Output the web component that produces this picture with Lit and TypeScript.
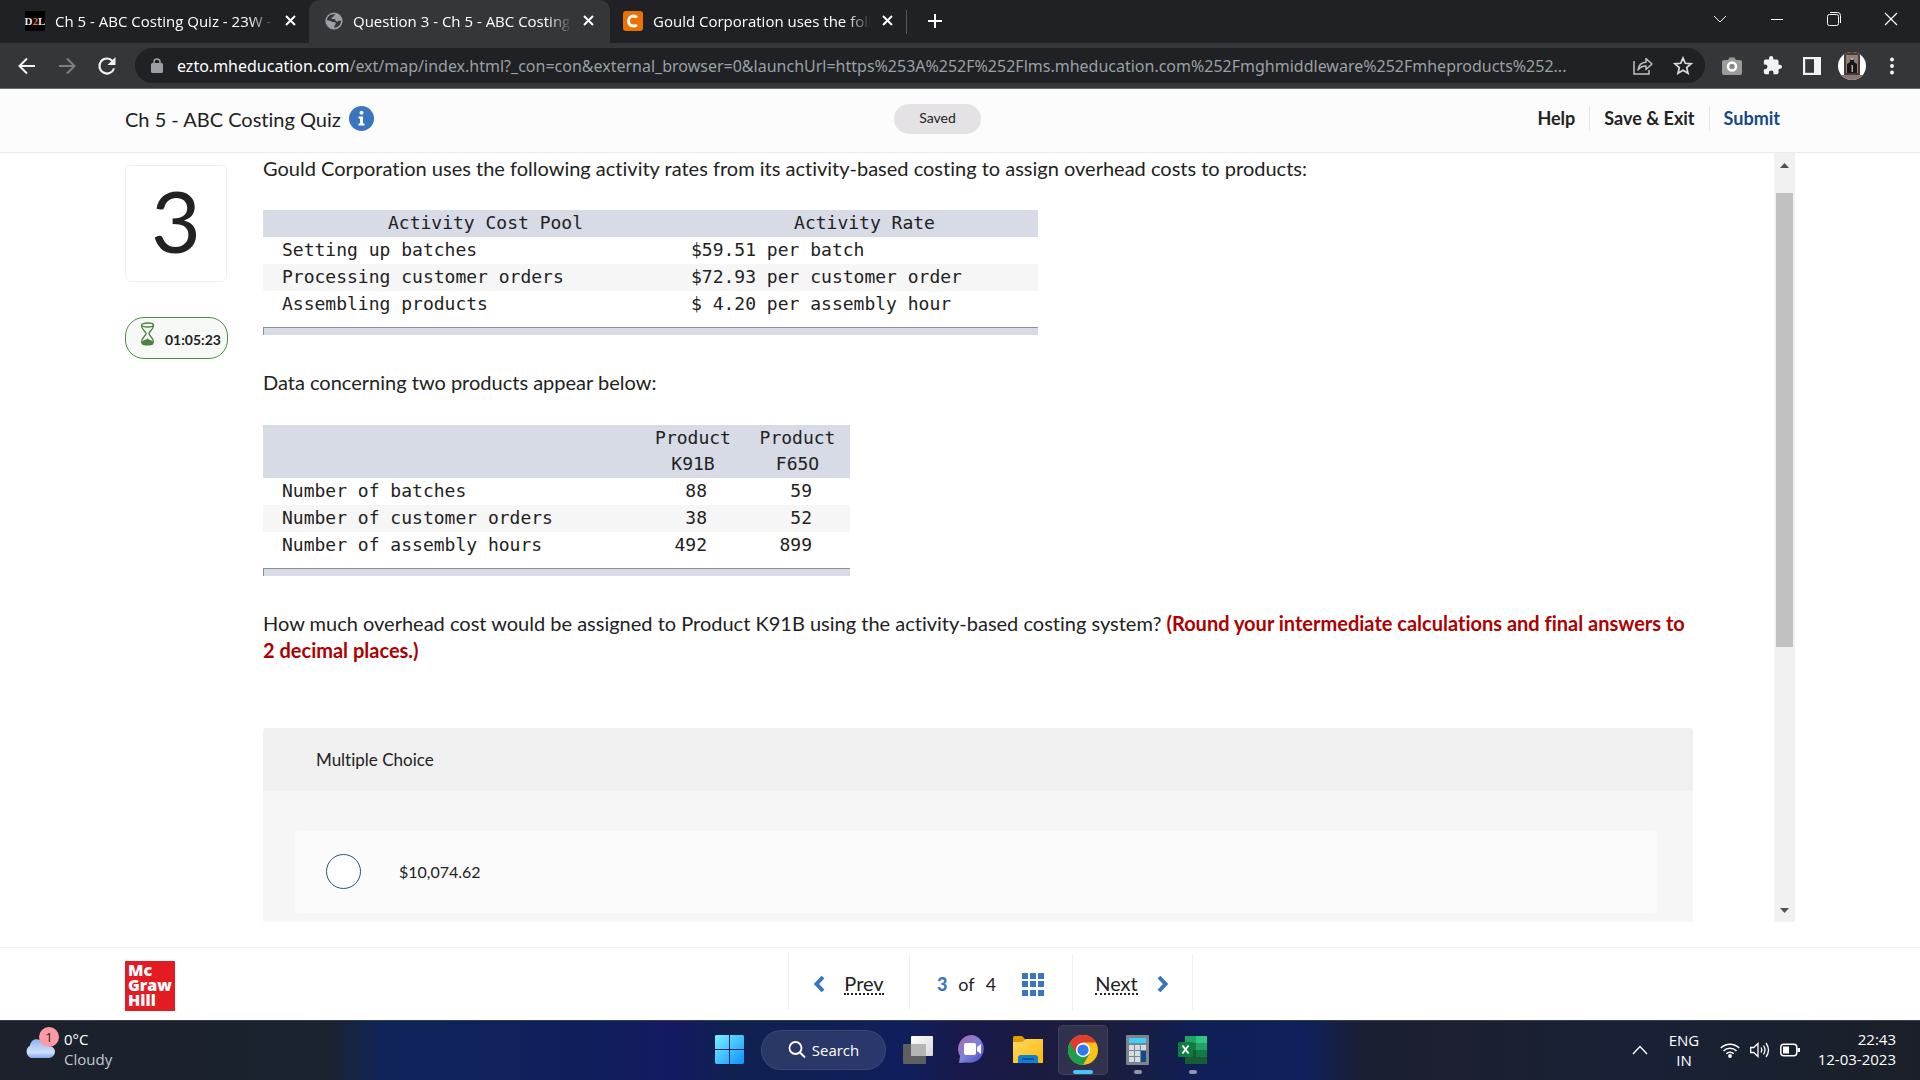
import { LitElement, html, svg, css } from "lit";
import { customElement, property, state } from "lit/decorators.js";

const baseStyles = css`
  :host, *, *::before, *::after { box-sizing: border-box; }
  button { border: 0; background: none; padding: 0; margin: 0; font: inherit; color: inherit; cursor: pointer; display: inline-flex; align-items: center; justify-content: center; }
  svg { display: block; flex: none; }
  p, h1, h2 { margin: 0; font: inherit; }
`;

const closeIcon = html`<svg width="14" height="14" viewBox="0 0 14 14"><path d="M2 2l9 9M11 2l-9 9" stroke="#fff" stroke-width="2" fill="none"/></svg>`;

const d2lIcon = html`<svg width="20" height="20" viewBox="0 0 20 20"><rect width="20" height="20" fill="#000"/>
  <text x="10" y="14" font-family="Liberation Serif, serif" font-size="11" font-weight="700" text-anchor="middle" fill="#e8e8e8">D<tspan fill="#e0762f">2</tspan>L</text></svg>`;

const globeIcon = html`<svg width="18" height="18" viewBox="0 0 18 18"><circle cx="9" cy="9" r="8.6" fill="#9aa0a6"/>
  <path d="M8 2.2C4.500 2.400 2.200 5 2 8.200l3 .5 2.400 1.200 2.800.4c1 .8.600 2.200-.5 2.900L9 15.800c4-.2 6.800-3 7-6.800l-2.200-.4-1.500 1.200-1.600-.8-.2-1.600-1.700-.4-1.800.3-.5-1.500 1.700-.7.5-1.500 1.800-.5-.6-.8z" fill="#35363a"/></svg>`;

const cheggIcon = html`<svg width="20" height="20" viewBox="0 0 20 20"><rect width="20" height="20" rx="3" fill="#eb7100"/>
  <path d="M14 6.200C13 5.300 12 5 10.500 5 7.500 5 5.600 7 5.600 10s1.900 5 4.900 5c1.500 0 2.500-.4 3.500-1.200" fill="none" stroke="#fff" stroke-width="2.800"/></svg>`;

interface Tab { title: string; icon: unknown; active?: boolean; }

@customElement("browser-chrome")
class BrowserChrome extends LitElement {
  @state() private tabs: Tab[] = [
    { title: "Ch 5 - ABC Costing Quiz - 23W --", icon: d2lIcon },
    { title: "Question 3 - Ch 5 - ABC Costing Q", icon: globeIcon, active: true },
    { title: "Gould Corporation uses the follow", icon: cheggIcon },
  ];

  static styles = [baseStyles, css`
    :host { display: block; font-family: "Open Sans", "Noto Sans", sans-serif; color: #fff; }
    .strip { display: flex; height: 43px; background: #202124; }
    .tabs { display: flex; }
    .tab { display: flex; align-items: center; width: 309px; padding: 0 11px 2px 25px; }
    .tab.active { background: #35363a; border-radius: 10px 10px 0 0; width: 301px; padding: 0 14px 2px 16px; }
    .tab:last-child { padding: 0 11px 2px 13px; width: 296px; }
    .name { flex: 1; min-width: 0; margin: 0 8px 0 10px; overflow: hidden; white-space: nowrap; font-size: 15px; line-height: 20px; -webkit-mask-image: linear-gradient(90deg, #000 88%, transparent 99%); mask-image: linear-gradient(90deg, #000 88%, transparent 99%); }
    .divider { width: 1px; height: 24px; margin-top: 10px; background: #56585c; }
    .plus { width: 56px; padding-bottom: 2px; }
    .window { margin-left: auto; display: flex; }
    .window button { width: 57px; padding: 0 2px 6px 0; }
    .bar { display: flex; align-items: center; height: 46px; padding: 0 14px 0 13px; background: #35363a; border-bottom: 1px solid #6a6b6e; }
    .nav { display: flex; width: 122px; gap: 12px; }
    .nav button { width: 28px; }
    .omni { flex: 1; min-width: 0; display: flex; align-items: center; height: 35px; border-radius: 18px; background: #202124; padding: 0 12px 0 16px; }
    .url { flex: 1; min-width: 0; white-space: nowrap; overflow: hidden; text-overflow: ellipsis; margin: 0 12px 0 14px; font-family: "Noto Sans", "Open Sans", sans-serif; font-size: 16px; line-height: 24px; color: #9aa0a6; }
    .url b { font-weight: 400; color: #fff; }
    .omni-actions { display: flex; gap: 20px; }
    .ext { display: flex; align-items: center; gap: 12px; padding-left: 13px; }
    .ext button { width: 28px; }
  `];

  render() {
    return html`
      <div class="strip">
        <div class="tabs">
          ${this.tabs.map((t) => html`<div class="tab ${t.active ? "active" : ""}">${t.icon}<span class="name">${t.title}</span><button aria-label="Close tab">${closeIcon}</button></div>`)}
        </div>
        <div class="divider"></div>
        <button class="plus" aria-label="New tab"><svg width="16" height="16" viewBox="0 0 16 16"><path d="M8 1v14M1 8h14" stroke="#fff" stroke-width="2"/></svg></button>
        <div class="window">
          <button aria-label="Search tabs"><svg width="14" height="14" viewBox="0 0 14 14"><path d="M1 4l6 6 6-6" fill="none" stroke="#fff"/></svg></button>
          <button aria-label="Minimize"><svg width="14" height="14" viewBox="0 0 14 14"><path d="M1 7.500h12" stroke="#fff"/></svg></button>
          <button aria-label="Restore"><svg width="14" height="14" viewBox="0 0 14 14"><rect x=".5" y="2.500" width="11" height="11" rx="2" fill="none" stroke="#fff"/><path d="M3 .5h7.500a3 3 0 0 1 3 3V11" fill="none" stroke="#fff"/></svg></button>
          <button aria-label="Close window"><svg width="14" height="14" viewBox="0 0 14 14"><path d="M1 1l12 12M13 1L1 13" stroke="#fff" stroke-width="1.200"/></svg></button>
        </div>
      </div>
      <div class="bar">
        <div class="nav">
          <button aria-label="Back"><svg width="18" height="18" viewBox="0 0 18 18"><path d="M17 9H2M9 1.500L1.500 9 9 16.500" fill="none" stroke="#f1f3f4" stroke-width="2"/></svg></button>
          <button aria-label="Forward"><svg width="18" height="18" viewBox="0 0 18 18"><path d="M1 9h15M9 1.500L16.500 9 9 16.500" fill="none" stroke="#7d7f83" stroke-width="2"/></svg></button>
          <button aria-label="Reload"><svg width="20" height="20" viewBox="0 0 20 20"><path d="M17 12.500A7.500 7.500 0 1 1 15.500 5L17 6.500" fill="none" stroke="#f1f3f4" stroke-width="2.200"/><path d="M18.500 1v8h-8z" fill="#f1f3f4"/></svg></button>
        </div>
        <div class="omni">
          <svg width="12" height="16" viewBox="0 0 12 16"><rect x="0" y="5" width="12" height="10" rx="1.500" fill="#9aa0a6"/><path d="M3 6V4a3 3 0 0 1 6 0v2" fill="none" stroke="#9aa0a6" stroke-width="1.500"/></svg>
          <div class="url"><b>ezto.mheducation.com</b>/ext/map/index.html?_con=con&amp;external_browser=0&amp;launchUrl=https%253A%252F%252Flms.mheducation.com%252Fmghmiddleware%252Fmheproducts%252...</div>
          <div class="omni-actions">
            <button aria-label="Share"><svg width="20" height="20" viewBox="0 0 20 20"><path d="M1 5v13h15v-4" fill="none" stroke="#bdc1c6" stroke-width="1.500"/><path d="M5 14c.5-5 3-7.500 8-7.800V2.500L19 8l-6 5.500V10c-3.500 0-6 1-8 4z" fill="none" stroke="#bdc1c6" stroke-width="1.500" stroke-linejoin="round"/></svg></button>
            <button aria-label="Bookmark"><svg width="20" height="20" viewBox="0 0 20 20"><path d="M10 2l2.300 5.300 5.700.5-4.300 3.800 1.300 5.700-5-3-5 3 1.300-5.700L2 7.800l5.700-.5z" fill="none" stroke="#dadce0" stroke-width="1.700"/></svg></button>
          </div>
        </div>
        <div class="ext">
          <button aria-label="Screenshot"><svg width="20" height="18" viewBox="0 0 20 18"><path d="M6 3l1.500-2.500h5L14 3h4a2 2 0 0 1 2 2v11a2 2 0 0 1-2 2H2a2 2 0 0 1-2-2V5a2 2 0 0 1 2-2z" fill="#9b9b9b"/><circle cx="10" cy="9.500" r="4" fill="#8a8a8a" stroke="#fff" stroke-width="2.500"/></svg></button>
          <button aria-label="Extensions"><svg width="19" height="19" viewBox="1 1 22 22"><path d="M20.500 11H19V7a2 2 0 0 0-2-2h-4V3.500a2.500 2.500 0 0 0-5 0V5H4a2 2 0 0 0-2 2v3.800h1.500a2.700 2.700 0 0 1 0 5.400H2V20a2 2 0 0 0 2 2h3.800v-1.500a2.700 2.700 0 0 1 5.400 0V22H17a2 2 0 0 0 2-2v-4h1.500a2.500 2.500 0 0 0 0-5z" fill="#f1f3f4"/></svg></button>
          <button aria-label="Side panel"><svg width="18" height="18" viewBox="0 0 18 18"><rect x="1" y="1" width="16" height="16" fill="none" stroke="#f1f3f4" stroke-width="2.400"/><path d="M11 0h7v18h-7z" fill="#f1f3f4"/></svg></button>
          <button aria-label="Profile"><svg width="28" height="28" viewBox="0 0 28 28"><defs><clipPath id="av"><circle cx="14" cy="14" r="14"/></clipPath></defs><g clip-path="url(#av)"><rect width="28" height="28" fill="#fff"/><path d="M6 0h16v24H6z" fill="#4b3a35"/><path d="M8 3h12v18H8z" fill="#8c827c"/><path d="M9 21l0-9 3-2 0-3h4v3l3 2 0 9z" fill="#17171a"/><path d="M13.500 13h1.500v7h-1.500zM12.500 6h3v2h-3z" fill="#c4a596"/><path d="M4 23h20v5H4z" fill="#8b7775"/></g></svg></button>
          <button aria-label="Menu"><svg width="6" height="18" viewBox="0 0 6 18"><g fill="#f1f3f4"><circle cx="3" cy="2.500" r="2"/><circle cx="3" cy="9" r="2"/><circle cx="3" cy="15.500" r="2"/></g></svg></button>
        </div>
      </div>`;
  }
}

@customElement("quiz-question")
class QuizQuestion extends LitElement {
  @property({ type: Number }) number = 3;

  static styles = [baseStyles, css`
    :host { display: grid; grid-template-columns: 104px minmax(0, 1fr) 21px; flex: 1; padding: 0 125px 25px; color: #222; font-family: Lato, "Open Sans", sans-serif; font-variant-ligatures: none; background: #fff; }
    .side { padding-top: 12px; }
    .num { display: flex; align-items: center; justify-content: center; height: 117px; width: 102px; padding-bottom: 8px; border: 1px solid #efefef; border-radius: 6px; font-size: 86px; line-height: 100px; }
    .timer { display: flex; align-items: center; gap: 10px; height: 42px; width: 103px; margin-top: 35px; padding: 2px 8px 0 14px; border: 1px solid #4f8a46; border-radius: 19px; background: #f6f9f6; font-size: 14px; font-weight: 700; white-space: nowrap; }
    .timer svg { margin-bottom: 10px; }
    .body { padding: 2px 81px 0 34px; font-size: 20px; line-height: 27px; display: flex; flex-direction: column; align-items: flex-start; }
    table { border-collapse: collapse; font-family: "DejaVu Sans Mono", "Liberation Mono", monospace; font-size: 18px; line-height: 26px; margin-top: 28px; white-space: pre; }
    th { font-weight: 400; background: #d6dbe6; text-align: center; }
    th, td { padding: 0 0 1px 19px; }
    td { text-align: left; }
    tr.alt td { background: #f6f6f6; }
    .rule { height: 8px; margin-top: 9px; background: #d6dbe6; border-top: 1px solid #8c8e99; border-left: 1px solid #8c8e99; }
    .w1 { width: 409px; padding-left: 36px; }
    .w2 { width: 366px; }
    .p1 { width: 378px; }
    .p2 { width: 104px; }
    .p3 { width: 105px; }
    .data th { padding: 0 0 1px; }
    .data .n { text-align: right; padding: 0 38px 1px 0; }
    .data table { margin-top: 29px; }
    .next { margin-top: 34px; }
    .hint { color: #ae0000; font-weight: 700; }
    .panel { align-self: stretch; margin-top: 64px; flex: 1; background: #f6f6f6; border-radius: 4px 4px 0 0; }
    .panel-head { height: 63px; padding: 18px 53px 0; background: #f0f0f0; border-radius: 4px 4px 0 0; font-size: 17px; }
    .choice { display: flex; align-items: center; height: 82px; margin: 40px 36px 0 32px; padding: 0 31px 2px; background: #fbfbfb; border-radius: 4px; font-size: 16px; gap: 38px; }
    .choice input { appearance: none; width: 35px; height: 35px; margin: 0; border: 1px solid #1d5488; border-radius: 50%; background: #fff; }
    .choice input:checked { background: #1d5488; box-shadow: inset 0 0 0 7px #fff; }
    .scroll { display: flex; flex-direction: column; align-items: center; background: #f1f1f1; }
    .scroll button { height: 24px; width: 21px; }
    .thumb { width: 17px; height: 454px; margin-top: 16px; background: #c1c1c1; margin-bottom: auto; }
  `];

  private rates = [
    ["Setting up batches", "$59.51 per batch"],
    ["Processing customer orders", "$72.93 per customer order"],
    ["Assembling products", "$ 4.20 per assembly hour"],
  ];

  private data = [
    ["Number of batches", "88", "59"],
    ["Number of customer orders", "38", "52"],
    ["Number of assembly hours", "492", "899"],
  ];

  render() {
    return html`
      <div class="side">
        <div class="num">${this.number}</div>
        <div class="timer">
          <svg width="15" height="24" viewBox="0 0 15 24"><g fill="none" stroke="#4a8240" stroke-width="1.400"><ellipse cx="7.500" cy="3" rx="6" ry="2"/><path d="M1.500 3c0 5.500 4.500 6 4.500 8.500s-4.500 3.500-4.500 9M13.500 3c0 5.500-4.500 6-4.500 8.500s4.500 3.500 4.500 9"/></g><path d="M1.500 20c2-2.500 5-1.500 6-4 1 2.500 4 1.500 6 4v2c-2 2-10 2-12 0z" fill="#4a8240"/></svg>
          <time>01:05:23</time>
        </div>
      </div>
      <div class="body">
        <p>Gould Corporation uses the following activity rates from its activity-based costing to assign overhead costs to products:</p>
        <div class="rates">
          <table>
            <thead><tr><th class="w1" scope="col">Activity Cost Pool</th><th class="w2" scope="col">Activity Rate</th></tr></thead>
            <tbody>${this.rates.map(([a, b], i) => html`<tr class=${i === 1 ? "alt" : ""}><td>${a}</td><td>${b}</td></tr>`)}</tbody>
          </table>
          <div class="rule"></div>
        </div>
        <p class="next">Data concerning two products appear below:</p>
        <div class="data">
          <table>
            <thead><tr><th class="p1"></th><th class="p2" scope="col">Product<br>K91B</th><th class="p3" scope="col">Product<br>F65O</th></tr></thead>
            <tbody>${this.data.map(([a, b, c], i) => html`<tr class=${i === 1 ? "alt" : ""}><td>${a}</td><td class="n">${b}</td><td class="n">${c}</td></tr>`)}</tbody>
          </table>
          <div class="rule"></div>
        </div>
        <p class="next">How much overhead cost would be assigned to Product K91B using the activity-based costing system? <strong class="hint">(Round your intermediate calculations and final answers to 2 decimal places.)</strong></p>
        <section class="panel">
          <h2 class="panel-head">Multiple Choice</h2>
          <label class="choice"><input type="radio" name="answer" value="10074.62"><span>$10,074.62</span></label>
        </section>
      </div>
      <div class="scroll">
        <button aria-label="Scroll up"><svg width="9" height="5" viewBox="0 0 9 5"><path d="M0 5l4.500-5L9 5z" fill="#505050"/></svg></button>
        <div class="thumb"></div>
        <button aria-label="Scroll down"><svg width="9" height="5" viewBox="0 0 9 5"><path d="M0 0l4.500 5L9 0z" fill="#505050"/></svg></button>
      </div>`;
  }
}

@customElement("quiz-header")
class QuizHeader extends LitElement {
  static styles = [baseStyles, css`
    :host { display: grid; grid-template-columns: 1fr auto 1fr; align-items: center; height: 64px; padding: 0 140px 4px 125px; background: #fcfcfc; border-bottom: 1px solid #ebebeb; color: #222; font-family: Lato, "Open Sans", sans-serif; font-variant-ligatures: none; }
    .title { display: flex; align-items: center; gap: 8px; font-size: 20px; line-height: 28px; }
    .saved { margin-right: 30px; padding: 0 25px; height: 30px; line-height: 28px; border-radius: 15px; background: #e4e2e5; font-size: 14px; }
    .links { justify-self: end; display: flex; font-size: 18px; line-height: 25px; font-weight: 700; }
    .links button { padding: 0 14px; border-right: 1px solid #e6e6e6; }
    .links button:last-child { border: 0; padding-right: 0; color: #134a86; }
  `];

  render() {
    return html`
      <h1 class="title">Ch 5 - ABC Costing Quiz
        <button aria-label="Quiz information"><svg width="25" height="25" viewBox="0 0 25 25"><circle cx="12.500" cy="12.500" r="12.500" fill="#3a76bd"/><circle cx="12.500" cy="6.800" r="2" fill="#fff"/><path d="M9.500 10.500h4.500v7h1.500v2h-6v-2H11v-5H9.500z" fill="#fff"/></svg></button>
      </h1>
      <div class="saved">Saved</div>
      <nav class="links"><button>Help</button><button>Save &amp; Exit</button><button>Submit</button></nav>`;
  }
}

@customElement("quiz-footer")
class QuizFooter extends LitElement {
  static styles = [baseStyles, css`
    :host { display: grid; grid-template-columns: 1fr auto 1fr; height: 73px; padding: 0 65px 0 125px; background: #fff; border-top: 1px solid #f1f1f1; color: #222; font-family: Lato, "Open Sans", sans-serif; }
    .logo { width: 50px; height: 50px; margin-top: 13px; padding: 2px 3px; background: #e31b23; color: #fff; font-family: "Open Sans", sans-serif; font-weight: 800; font-size: 16px; line-height: 15px; }
    .pager { display: flex; margin-top: 6px; height: 56px; font-size: 20px; line-height: 24px; border-left: 1px solid #efefef; }
    .cell { display: flex; align-items: center; justify-content: center; padding-top: 4px; border-right: 1px solid #efefef; }
    .prev { width: 121px; gap: 19px; }
    .mid { width: 163px; font-size: 18px; gap: 11px; }
    .next { width: 120px; gap: 19px; }
    .label { border-bottom: 2px dotted #222; line-height: 20px; }
    .current { color: #3a76bd; font-weight: 900; }
    .mid button { margin-left: 15px; }
  `];

  render() {
    return html`
      <div class="logo">Mc<br>Graw<br>Hill</div>
      <nav class="pager">
        <button class="cell prev"><svg width="12" height="18" viewBox="0 0 12 18"><path d="M10 2L3.500 9l6.500 7" fill="none" stroke="#3a76bd" stroke-width="4"/></svg><span class="label">Prev</span></button>
        <div class="cell mid"><span class="current">3</span><span>of</span><span>4</span>
          <button aria-label="All questions"><svg width="22" height="23" viewBox="0 0 22 23"><g fill="#3a76bd">${[0, 8, 16].map((x) => [0, 8, 17].map((y) => svg`<rect x=${x} y=${y} width="6" height="6"/>`))}</g></svg></button></div>
        <button class="cell next"><span class="label">Next</span><svg width="12" height="18" viewBox="0 0 12 18"><path d="M2 2l6.500 7L2 16" fill="none" stroke="#3a76bd" stroke-width="4"/></svg></button>
      </nav>`;
  }
}

@customElement("desktop-taskbar")
class DesktopTaskbar extends LitElement {
  static styles = [baseStyles, css`
    :host { display: grid; grid-template-columns: 1fr auto 1fr; height: 60px; padding: 0 24px 2px 25px; border-top: 1px solid #35404f; color: #fff; font-family: "Open Sans", "Noto Sans", sans-serif; font-size: 15px; line-height: 20px;
      background: linear-gradient(90deg, #1c212b 0%, #1a2330 17%, #10245a 20%, #101f5c 30%, #141a62 35%, #10204f 38%, #101f5c 47%, #18194a 50%, #1c1d3a 57%, #0f1f58 63%, #10205a 68%, #1a1f33 71%, #1c2030 76%, #182136 85%, #1b2028 100%); }
    .weather { justify-self: start; align-items: flex-start; gap: 5px; padding-top: 6px; text-align: left; }
    .weather div { padding-top: 2px; }
    .weather small { display: block; font-size: 15px; color: #c4c8cf; }
    .apps { display: flex; align-items: center; margin-left: 6px; }
    .app { position: relative; width: 55px; height: 50px; }
    .app.start { width: 44px; }
    .search { width: 125px; height: 40px; margin: 0 4px 0 10px; gap: 6px; border-radius: 20px; background: #ffffff1c; border: 1px solid #ffffff12; }
    .app.on .tile { display: flex; align-items: center; justify-content: center; width: 50px; height: 50px; border-radius: 5px; background: #ffffff18; border: 1px solid #ffffff14; }
    .app i { position: absolute; bottom: 1px; left: 24px; width: 8px; height: 4px; border-radius: 2px; background: #9397a5; }
    .app.on i { left: 18px; width: 20px; background: #4cc2ff; }
    .tray { justify-self: end; display: flex; align-items: center; }
    .lang { width: 72px; text-align: center; }
    .status { display: flex; gap: 10px; padding-right: 17px; }
    .clock { text-align: right; width: 79px; white-space: nowrap; padding-bottom: 2px; }
  `];

  render() {
    return html`
      <button class="weather">
        <svg width="34" height="32" viewBox="2 0 34 32"><defs><linearGradient id="cl" x2="0" y2="1"><stop offset="0" stop-color="#8fb6ee"/><stop offset=".7" stop-color="#cfe0fb"/><stop offset="1" stop-color="#86a8ee"/></linearGradient></defs><path d="M8 31a7 7 0 0 1 -1-12.500C8 13 12 11 17 13c3 0 6 3 7 6 11-1 10 12 1 12z" fill="url(#cl)"/><circle cx="26" cy="10" r="10" fill="#ff99a4"/><text x="26" y="15" font-size="13" text-anchor="middle" fill="#222" font-family="Open Sans, sans-serif">1</text></svg>
        <div>0°C<small>Cloudy</small></div>
      </button>
      <div class="apps">
        <button class="app start" aria-label="Start"><svg width="29" height="29" viewBox="0 0 29 29"><defs><linearGradient id="w" gradientUnits="userSpaceOnUse" x2="29" y2="29"><stop offset="0" stop-color="#7bf0ff"/><stop offset="1" stop-color="#0a92ff"/></linearGradient></defs><path d="M1 0h13v14H0V1zM15 0h13l1 1v13H15zM0 15h14v14H1l-1-1zM15 15h14v13l-1 1H15z" fill="url(#w)"/></svg></button>
        <button class="search"><svg width="18" height="18" viewBox="0 0 18 18"><circle cx="7.500" cy="7" r="6" fill="none" stroke="#fff" stroke-width="1.800"/><path d="M12 11.500l5 5" stroke="#fff" stroke-width="2"/></svg>Search</button>
        <button class="app" aria-label="Task view"><svg width="30" height="28" viewBox="0 0 30 28"><defs><linearGradient id="tv" x2="1" y2="1"><stop offset="0" stop-color="#fff"/><stop offset="1" stop-color="#d8d8d8"/></linearGradient></defs><rect y="8" width="23" height="20" rx="1" fill="#5f5f60"/><rect x="8" width="22" height="20" rx="1" fill="url(#tv)"/><path d="M8 8h15v12H8z" fill="#b5b5b5"/></svg></button>
        <button class="app" aria-label="Chat"><svg width="29" height="29" viewBox="0 0 29 29"><defs><linearGradient id="ch" x2="1" y2="1"><stop offset=".1" stop-color="#a56bb0"/><stop offset=".5" stop-color="#7f82dc"/><stop offset="1" stop-color="#4349bf"/></linearGradient></defs><path d="M14.500 0A14 14 0 1 1 9 27.500L1 28l1-7A14 14 0 0 1 14.500 0z" fill="url(#ch)"/><rect x="6" y="8" width="12" height="12" rx="2" fill="#fff"/><path d="M19 12l4-3v10l-4-3z" fill="#fff"/></svg></button>
        <button class="app" aria-label="File Explorer"><svg width="30" height="27" viewBox="0 0 30 27"><defs><linearGradient id="fo" x2="1" y2="1"><stop offset="0" stop-color="#ffd867"/><stop offset="1" stop-color="#ffb900"/></linearGradient></defs><path d="M0 1.500Q0 0 1.500 0H9l4 4-4 4H0z" fill="#e09c00"/><path d="M0 6h9l4-3h17v24H0z" fill="url(#fo)"/><path d="M5 27v-5q0-3 3-3h14q3 0 3 3v5z" fill="#0f7fd4"/><path d="M9 23h12" stroke="#064a86" stroke-width="1.500"/></svg></button>
        <button class="app on" aria-label="Chrome"><span class="tile"><svg width="30" height="30" viewBox="0 0 48 48"><circle cx="24" cy="24" r="24" fill="#fbc116"/><path d="M3.200 12A24 24 0 0 0 24 48l10.400-18L24 24z" fill="#219b4c"/><path d="M3.200 12A24 24 0 0 1 44.800 12H24L13.600 30z" fill="#e33b2e"/><circle cx="24" cy="24" r="11.500" fill="#fff"/><circle cx="24" cy="24" r="9" fill="#3078ee"/></svg></span><i></i></button>
        <button class="app" aria-label="Calculator"><svg width="23" height="30" viewBox="0 0 23 30"><rect width="23" height="30" rx="1" fill="#7d858c"/><rect x="3" y="3" width="17" height="5" fill="#3cd2f8"/><g fill="#d5dce2">${[10, 16, 22].map((y) => [3, 9, 15].map((x) => x === 15 && y > 10 ? "" : svg`<rect x=${x} y=${y} width="5" height="5"/>`))}</g><rect x="15" y="16" width="5" height="11" fill="#114a8b"/></svg><i></i></button>
        <button class="app" aria-label="Excel"><svg width="30" height="28" viewBox="0 0 30 28"><path d="M7 0h11v7H7z" fill="#21a366"/><path d="M18 0h11v7H18z" fill="#33c481"/><path d="M7 7h11v7H7z" fill="#107c41"/><path d="M18 7h11v7H18z" fill="#21a366"/><path d="M7 14h11v7H7z" fill="#185c37"/><path d="M18 14h11v7H18z" fill="#107c41"/><path d="M7 21h22v7H7z" fill="#185c37"/><rect y="6" width="15" height="15" rx="1" fill="#107c41"/><path d="M4.500 9.500l6 8M10.500 9.500l-6 8" stroke="#fff" stroke-width="2"/></svg><i></i></button>
      </div>
      <div class="tray">
        <button aria-label="Show hidden icons"><svg width="16" height="10" viewBox="0 0 16 10"><path d="M1 9l7-7.500L15 9" fill="none" stroke="#fff" stroke-width="1.400"/></svg></button>
        <div class="lang">ENG<br>IN</div>
        <div class="status">
          <svg width="20" height="16" viewBox="0 0 20 16"><g fill="none" stroke="#fff" stroke-width="1.500"><path d="M.8 6a13 13 0 0 1 18.400 0M3.500 9a9.200 9.200 0 0 1 13 0M6.300 11.800a5.300 5.300 0 0 1 7.400 0"/></g><circle cx="10" cy="14" r="1.900" fill="#fff"/></svg>
          <svg width="20" height="16" viewBox="0 0 20 16"><g fill="none" stroke="#fff" stroke-width="1.300"><path d="M.7 5.500h3L8 1.500v13l-4.300-4h-3z"/><path d="M11 5.500q1.500 2.500 0 5M13.500 3.500q3 4.500 0 9M16 1q5 7 0 14"/></g></svg>
          <svg width="20" height="16" viewBox="0 0 20 16"><rect x=".8" y="2.300" width="16" height="11.500" rx="3" fill="none" stroke="#fff" stroke-width="1.500"/><rect x="3" y="4.500" width="6" height="7" fill="#fff"/><path d="M17.500 6H20v4h-2.500z" fill="#fff"/></svg>
        </div>
        <div class="clock">22:43<br>12-03-2023</div>
      </div>`;
  }
}

@customElement("app-root")
class AppRoot extends LitElement {
  static styles = css`
    :host { display: flex; flex-direction: column; min-height: 100vh; background: #fff; }
  `;

  render() {
    return html`
      <browser-chrome></browser-chrome>
      <quiz-header></quiz-header>
      <quiz-question .number=${3}></quiz-question>
      <quiz-footer></quiz-footer>
      <desktop-taskbar></desktop-taskbar>`;
  }
}
